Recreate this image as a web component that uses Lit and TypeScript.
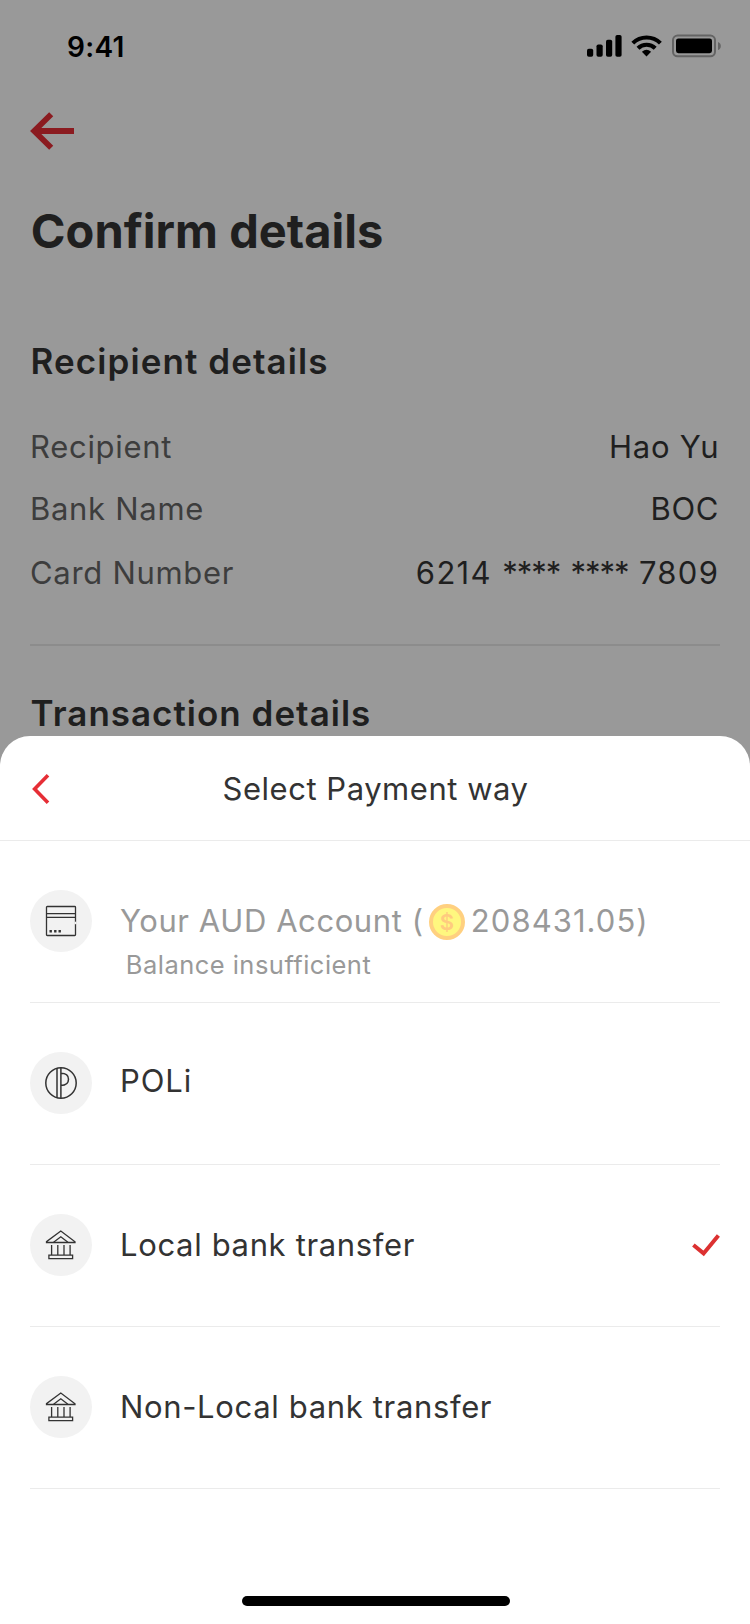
import { LitElement, html, css, svg } from "lit";
import { customElement } from "lit/decorators.js";
import { classMap } from "lit/directives/class-map.js";

const cardIcon = svg`
  <rect x="1.5" y="1.5" width="29" height="29" rx="0.8"/>
  <path d="M1.5 8.7H30.5M1.5 12.4H30.5"/>
  <path class="gap" d="M30.5 16.7V19.2"/>
  <path class="dots" d="M4.5 26.3h2.4M9.1 26.3h2.4M13.5 26.3h2.4"/>`;
const poliIcon = svg`
  <circle cx="16" cy="16" r="15.2"/>
  <path d="M12 1.3V30.7M15.9 .7V31.3M15.9 6.3C21.3 6.3 23.5 8.7 23.5 12.3S21.3 18.4 15.9 18.4"/>`;
const bankIcon = svg`
  <path d="M1.5 13.5V12.7L15.8 2L30 12.7V13.5Z"/>
  <path d="M8.6 13.2L15.8 7.8L22.9 13.2"/>
  <path d="M6.6 16V26M12.8 16V26M19 16V26M25.1 16V26"/>
  <path d="M3.9 26.1H27.6V29.6H3.9Z"/>`;

const methods = [
  { id: "aud", icon: cardIcon },
  { id: "poli", icon: poliIcon, label: "POLi" },
  { id: "local", icon: bankIcon, label: "Local bank transfer", selected: true },
  { id: "intl", icon: bankIcon, label: "Non-Local bank transfer" },
];

@customElement("app-root")
export class AppRoot extends LitElement {
  static styles = css`
    :host { display: block; position: relative; width: 750px; height: 1624px; overflow: hidden; background: #999;
      font-family: Inter, "Liberation Sans", sans-serif; font-size: 31px; line-height: 40px; letter-spacing: .7px; color: #333; }
    svg { display: block; overflow: visible; fill: none; }
    .page { color: #1f1f1f; padding: 0 30px; }
    .status { height: 94px; display: flex; align-items: center; justify-content: space-between; }
    .time { font-size: 28px; font-weight: 600; letter-spacing: .3px; color: #000; padding-left: 37px; }
    .nav { height: 74px; display: flex; align-items: center; }
    h1, h2 { margin: 0; display: flex; align-items: center; }
    h1 { height: 126px; font-size: 47px; font-weight: 700; letter-spacing: .02px; padding-left: .8px; }
    h2 { font-size: 35px; font-weight: 600; letter-spacing: 1.08px; height: 110px; padding: 12px 0 0 .6px; }
    .second { height: 134px; padding-top: 0; letter-spacing: 1px; }
    .detail { height: 62px; display: flex; align-items: center; justify-content: space-between; padding-right: .8px; }
    .detail.last { height: 66px; margin-bottom: 38px; }
    .key { color: #3d3d3d; }
    .card { white-space: pre; letter-spacing: 1.7px; }
    .digits { letter-spacing: 1.3px; }
    .stars { letter-spacing: -1.05px; }
    .rule { height: 2px; background: #8c8c8c; }
    .sheet { position: absolute; left: 0; right: 0; top: 736px; bottom: 0; background: #fff; border-radius: 30px 30px 0 0;
      display: flex; flex-direction: column; }
    header { box-sizing: border-box; height: 105px; padding: 1px 31px 0 32px; border-bottom: 1px solid #ebebeb;
      display: grid; grid-template-columns: 18px 1fr 18px; align-items: center; text-align: center; letter-spacing: .53px; }
    .method { box-sizing: border-box; height: 162px; margin: 0 30px; padding-top: 49px; border-bottom: 1px solid #ebebeb;
      display: flex; align-items: flex-start; }
    .badge { width: 62px; height: 62px; border-radius: 50%; background: #f2f2f2; display: grid; place-items: center; margin-right: 28px; }
    .glyph { stroke: #333; stroke-width: 1.3; }
    .poli .glyph { stroke-width: 1.5; }
    .gap { stroke: #f2f2f2; stroke-width: 2; }
    .dots { stroke-width: 2.4; }
    .label { height: 62px; display: flex; align-items: center; flex: 1; letter-spacing: .65px; }
    .poli .label { height: 58px; letter-spacing: .9px; }
    .check { margin-top: 20px; }
    .account { display: flex; flex-direction: column; color: #999; }
    .line { height: 62px; display: flex; align-items: center; letter-spacing: .58px; white-space: pre; }
    .coin { margin: 2px 6.3px 0 5px; }
    .amount { letter-spacing: 1.05px; }
    .sign { font-size: 22px; font-weight: 600; fill: #ffcb7f; letter-spacing: 0; }
    .note { font-size: 25.5px; letter-spacing: .47px; line-height: 32px; margin-top: -3px; padding-left: 5.8px; }
    .home { width: 268px; height: 10px; border-radius: 5px; background: #000; margin: auto 0 18px 242px; }
  `;

  private row(key: string, value: unknown, last = false) {
    return html`<div class=${classMap({ detail: true, last })}><span class="key">${key}</span><span>${value}</span></div>`;
  }

  private account() {
    return html`<div class="account">
      <div class="line"><span>Your AUD Account (</span><svg class="coin" width="36" height="36" viewBox="0 0 36 36">
        <circle cx="18" cy="18" r="16" fill="#fff77f" stroke="#ffd080" stroke-width="4"/>
        <text class="sign" x="18" y="26" text-anchor="middle">$</text></svg><span class="amount">208431.05)</span></div>
      <div class="note">Balance insufficient</div>
    </div>`;
  }

  render() {
    return html`
      <div class="page">
        <div class="status">
          <span class="time">9:41</span>
          <svg width="134" height="24" viewBox="586 35 134 24">
            <g fill="#000">
              <rect x="587" y="48.7" width="6.2" height="8" rx="1.8"/>
              <rect x="596.5" y="44.5" width="6.2" height="12.2" rx="1.8"/>
              <rect x="606" y="39.8" width="6.2" height="16.9" rx="1.8"/>
              <rect x="615.4" y="35" width="6.2" height="21.7" rx="1.8"/>
              <path d="M641.9 51.7Q646.5 48 651.1 51.7L646.5 56.5Z"/>
              <rect x="676" y="38.4" width="36" height="14.8" rx="2.4"/>
            </g>
            <g stroke="#000" stroke-width="4.1">
              <path d="M632.8 43.1A19.8 19.8 0 0 1 660.4 43.1"/>
              <path d="M638 48.3A12.2 12.2 0 0 1 655.2 48.3"/>
            </g>
            <rect x="673" y="35.5" width="42" height="20.8" rx="4.6" stroke="#646464" stroke-width="2"/>
            <path d="M718 42V50Q720.8 49 720.8 46T718 42Z" fill="#646464"/>
          </svg>
        </div>
        <div class="nav">
          <svg width="44" height="38" viewBox="0 0 44 38" stroke="#8b1b20" stroke-width="5.8">
            <path d="M44 19H5M21.2 2.2L4.2 19L21.2 35.8"/>
          </svg>
        </div>
        <h1>Confirm details</h1>
        <h2>Recipient details</h2>
        ${this.row("Recipient", "Hao Yu")}
        ${this.row("Bank Name", "BOC")}
        ${this.row("Card Number", html`<span class="card"><span class="digits">6214</span> <span class="stars">****</span> <span class="stars">****</span> <span class="digits">7809</span></span>`, true)}
        <div class="rule"></div>
        <h2 class="second">Transaction details</h2>
      </div>
      <div class="sheet">
        <header>
          <svg width="18" height="30" viewBox="0 0 18 30" stroke="#e62e36" stroke-width="3.6"><path d="M16 1.3L2.6 15L16 28.7"/></svg>
          <span>Select Payment way</span>
        </header>
        ${methods.map(m => html`<div class="method ${m.id}">
          <div class="badge"><svg class="glyph" width="32" height="32" viewBox="0 0 32 32">${m.icon}</svg></div>
          ${m.label ? html`<div class="label">${m.label}</div>` : this.account()}
          ${m.selected ? html`<svg class="check" width="28" height="23" viewBox="0 0 28 23" stroke="#dc3131" stroke-width="4"><path d="M1.4 11L11.6 19.4L26.4 1.4"/></svg>` : ""}
        </div>`)}
        <div class="home"></div>
      </div>`;
  }
}
